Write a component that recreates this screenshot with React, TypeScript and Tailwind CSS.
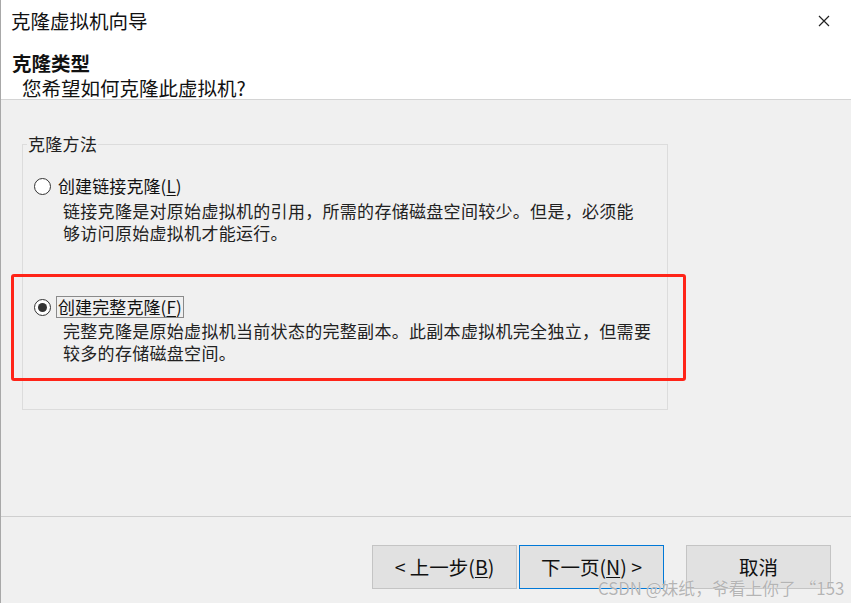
import React from "react";

const FONT = { fontFamily: '"Noto Sans CJK SC", "Noto Sans", sans-serif' };

function Radio({ checked }: { checked?: boolean }) {
  return (
    <span className="flex h-[17px] w-[17px] shrink-0 items-center justify-center rounded-full border-[1.6px] border-[#333333] bg-white">
      {checked && <span className="h-[9px] w-[9px] rounded-full bg-[#333333]" />}
    </span>
  );
}

function Btn({ children, active }: { children: React.ReactNode; active?: boolean }) {
  return (
    <button
      className={
        "flex h-[44px] w-[145px] items-center justify-center border bg-[#e1e1e1] text-[19.5px] leading-[22px] text-[#111] " +
        (active ? "border-[#0078d7]" : "border-[#c4c4c4]")
      }
    >
      {children}
    </button>
  );
}

export default function App() {
  return (
    <div className="relative h-[603px] w-[851px] overflow-hidden border-l border-[#a8a8a8] bg-[#f0f0f0] text-[#111]" style={FONT}>
      {/* Header */}
      <div className="h-[100px] border-b border-[#d4d4d4] bg-white">
        <div className="flex items-center justify-between pl-[10px] pr-[20px] pt-[10px]">
          <span className="text-[19.5px] leading-[22px]">克隆虚拟机向导</span>
          <svg width="12" height="12" viewBox="0 0 12 12" className="mr-[1px]">
            <path d="M1 1 L11 11 M11 1 L1 11" stroke="#222" strokeWidth="1.2" fill="none" />
          </svg>
        </div>
        <div className="mt-[20px] pl-[11px] text-[19.5px] font-bold leading-[22px]">克隆类型</div>
        <div className="mt-[3px] pl-[21px] text-[19.5px] leading-[22px]">您希望如何克隆此虚拟机?</div>
      </div>

      {/* Body */}
      <div className="h-[416px] pl-[21px] pt-[34px]">
        <fieldset className="h-[276px] w-[646px] border border-[#dcdcdc] px-0 pb-0">
          <legend className="ml-[4px] px-[1px] text-[17px] leading-[20px] tracking-[0.3px] text-[#222]">克隆方法</legend>
          <div className="pl-[11px] pt-[21px]">
            <div className="flex items-center gap-[7px]">
              <Radio />
              <span className="text-[17px] leading-[22px] tracking-[0.1px]">
                创建链接克隆(<span className="underline underline-offset-2">L</span>)
              </span>
            </div>
            <div className="mt-[3px] pl-[29px] text-[17px] leading-[22px] tracking-[0.3px] text-[#222]">
              <div>链接克隆是对原始虚拟机的引用，所需的存储磁盘空间较少。但是，必须能</div>
              <div>够访问原始虚拟机才能运行。</div>
            </div>

            <div className="mt-[52px] flex items-center gap-[5px]">
              <Radio checked />
              <span className="border border-[#8a8a8a] px-[1px] text-[17px] leading-[20px] tracking-[0.1px]">
                创建完整克隆(<span className="underline underline-offset-2">F</span>)
              </span>
            </div>
            <div className="mt-[2px] pl-[29px] text-[17px] leading-[22px] tracking-[0.3px] text-[#222]">
              <div>完整克隆是原始虚拟机当前状态的完整副本。此副本虚拟机完全独立，但需要</div>
              <div>较多的存储磁盘空间。</div>
            </div>
          </div>
        </fieldset>
      </div>

      {/* Footer */}
      <div className="h-[87px] border-t border-[#cfcfcf] pt-[28px]">
        <div className="flex justify-end pr-[20px]">
          <div className="flex gap-[2px]">
            <Btn>
              &lt; 上一步(<span className="underline underline-offset-2">B</span>)
            </Btn>
            <Btn active>
              下一页(<span className="underline underline-offset-2">N</span>) &gt;
            </Btn>
          </div>
          <div className="ml-[22px]">
            <Btn>取消</Btn>
          </div>
        </div>
      </div>

      {/* Red annotation rectangle */}
      <div className="pointer-events-none absolute left-[10px] top-[274px] h-[107px] w-[675px] rounded-[3px] border-[3px] border-[#ff2418]" />

      {/* Watermark */}
      <div
        className="pointer-events-none absolute left-[597px] top-[577px] whitespace-nowrap text-[16.8px] leading-[22px] text-[#b4b4b4]"
        style={{ textShadow: "0 0 1px rgba(255,255,255,0.9)" }}
      >
        CSDN @妹纸，爷看上你了 “153
      </div>
    </div>
  );
}
